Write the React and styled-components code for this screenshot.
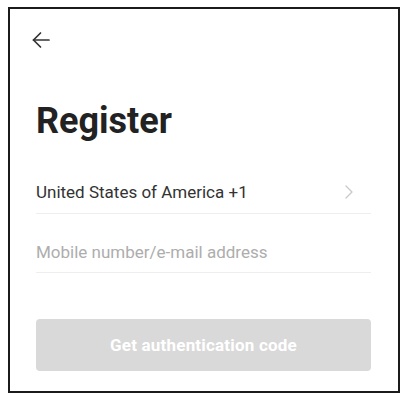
import React from 'react'
import styled, { createGlobalStyle } from 'styled-components'

const GlobalStyle = createGlobalStyle`
  body {
    margin: 0;
    background: #fff;
    font-family: Roboto, "Liberation Sans", sans-serif;
  }
`

const Page = styled.div`
  padding: 7px 0 0 8px;
`

const Frame = styled.main`
  box-sizing: border-box;
  width: 392px;
  height: 386px;
  border: 2px solid #1b1b1b;
  background: #fff;
`

const Header = styled.header`
  display: flex;
  padding: 19px 0 0 19px;
`

const BackButton = styled.button`
  display: flex;
  padding: 0;
  border: none;
  background: none;
  color: #333;
  cursor: pointer;
`

const Title = styled.h1`
  margin: 48px 0 0;
  padding: 0 26px;
  font-size: 36px;
  line-height: 42px;
  font-weight: 700;
  color: #222;
`

const Form = styled.form`
  display: flex;
  flex-direction: column;
  padding: 0 27px 0 26px;
`

const Field = styled.div`
  display: flex;
  align-items: center;
  justify-content: space-between;
  margin-top: ${p => p.$first ? '12px' : '0'};
  padding: 28px 0 ${p => p.$first ? '11px' : '10px'};
  border-bottom: 1px solid #eeeeee;
`

const Country = styled.span`
  font-size: 17px;
  line-height: 20px;
  color: #333;
`

const Chevron = styled.svg`
  margin-right: 16px;
  color: #c9c9c9;
`

const Input = styled.input`
  flex: 1;
  height: 20px;
  padding: 0;
  border: none;
  outline: none;
  font-family: inherit;
  font-size: 17px;
  line-height: 20px;
  color: #333;
  &::placeholder {
    color: #adadad;
  }
`

const SubmitButton = styled.button`
  margin-top: 46px;
  height: 52px;
  border: none;
  border-radius: 4px;
  background: #d9d9d9;
  color: #fff;
  font-family: inherit;
  font-size: 17px;
  font-weight: 700;
  letter-spacing: 0.2px;
`

const App = () => {
  return <Page>
    <GlobalStyle />
    <Frame>
      <Header>
        <BackButton aria-label='back'>
          <svg width='24' height='24' viewBox='0 0 24 24' fill='none' stroke='currentColor' strokeWidth='1.7' strokeLinecap='round' strokeLinejoin='round'>
            <path d='M20 12H4.5' />
            <path d='M11.5 5l-7 7 7 7' />
          </svg>
        </BackButton>
      </Header>
      <Title>Register</Title>
      <Form onSubmit={e => e.preventDefault()}>
        <Field $first>
          <Country>United States of America +1</Country>
          <Chevron width='12' height='16' viewBox='0 0 12 16' fill='none' stroke='currentColor' strokeWidth='1.3' strokeLinecap='round' strokeLinejoin='round'>
            <path d='M3 2l6 6-6 6' />
          </Chevron>
        </Field>
        <Field>
          <Input placeholder='Mobile number/e-mail address' />
        </Field>
        <SubmitButton type='submit' disabled>Get authentication code</SubmitButton>
      </Form>
    </Frame>
  </Page>
}

export default App
